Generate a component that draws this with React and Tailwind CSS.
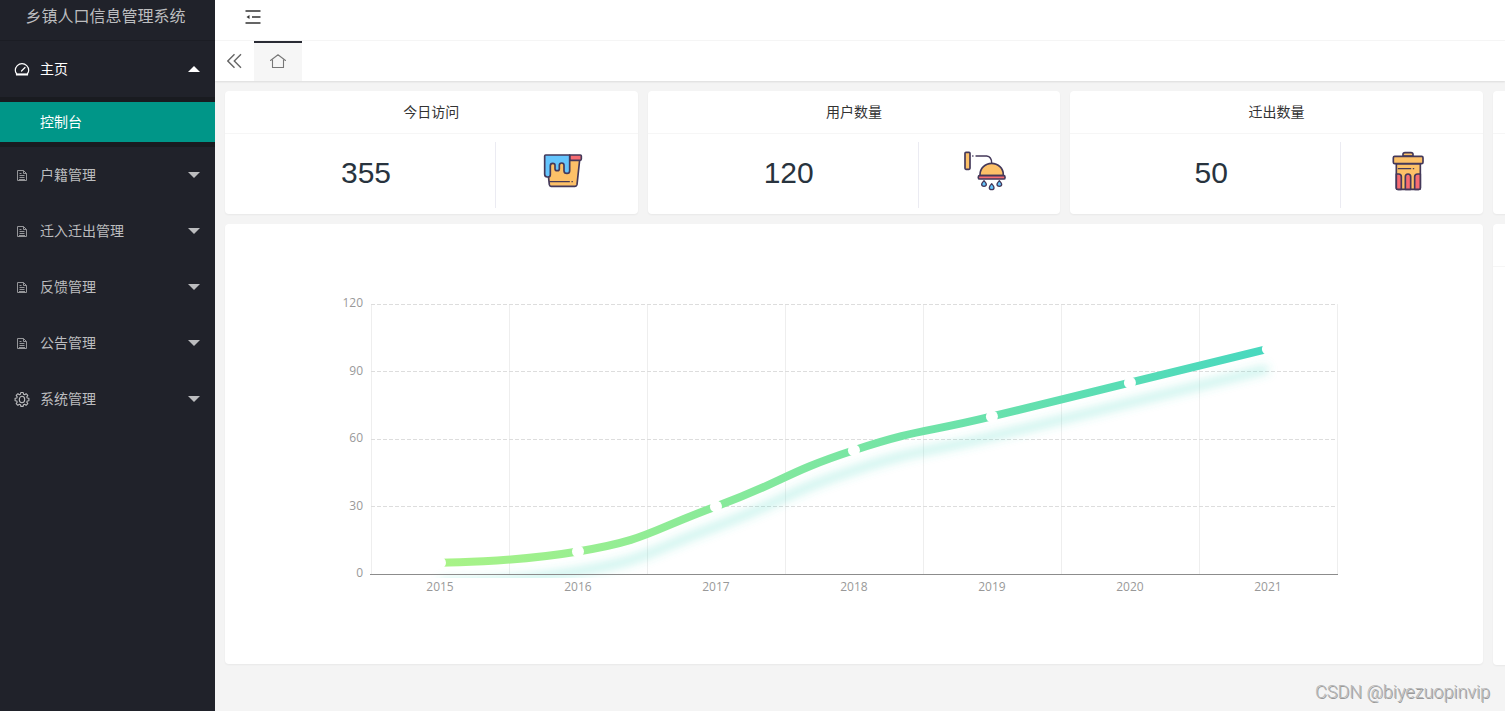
import { useState } from 'react';

const menus = [
  { label: '户籍管理', icon: FileIcon },
  { label: '迁入迁出管理', icon: FileIcon },
  { label: '反馈管理', icon: FileIcon },
  { label: '公告管理', icon: FileIcon },
  { label: '系统管理', icon: GearIcon },
];

const stats = [
  { title: '今日访问', value: 355, icon: BucketIcon },
  { title: '用户数量', value: 120, icon: ShowerIcon },
  { title: '迁出数量', value: 50, icon: TrashIcon },
];

const series = [
  { year: 2015, value: 5 },
  { year: 2016, value: 10 },
  { year: 2017, value: 30 },
  { year: 2018, value: 55 },
  { year: 2019, value: 70 },
  { year: 2020, value: 85 },
  { year: 2021, value: 100 },
];

/* ---------- Icons ---------- */

function GaugeIcon() {
  return (
    <svg className="size-4" viewBox="0 0 16 16" fill="none" stroke="currentColor" strokeWidth="1.2">
      <path d="M2.5 14V12.5C1.7 11.6 1.3 10.5 1.3 9.3a6.7 6.7 0 0 1 13.4 0c0 1.2-.4 2.3-1.2 3.2V14z" strokeLinejoin="round" />
      <path d="M7.5 10l3.5-3.5" strokeLinecap="round" />
      <path d="M2.5 13.2h11" strokeWidth="1.6" />
    </svg>
  );
}

function FileIcon() {
  return (
    <svg className="size-4 opacity-75" viewBox="0 0 16 16" fill="none" stroke="currentColor" strokeWidth="1">
      <path d="M3.5 3.5h6l3 3v7h-9z" />
      <path d="M9.5 3.5v3h3M5.5 6.5h2M5.5 8.5h5M5.5 10.5h5M5 12.5h6" />
    </svg>
  );
}

function GearIcon() {
  return (
    <svg className="size-4" viewBox="0 0 16 16" fill="none" stroke="currentColor" strokeWidth="1.1">
      <path
        d="M6.8 1.5h2.4l.3 1.7 1.1.5 1.5-1 1.7 1.7-1 1.5.4 1.1 1.7.3v2.4l-1.7.3-.4 1.1 1 1.5-1.7 1.7-1.5-1-1.1.4-.3 1.7H6.8l-.3-1.7-1.1-.4-1.5 1-1.7-1.7 1-1.5-.4-1.1-1.7-.3V7.300l1.7-.3.4-1.100-1-1.500 1.700-1.700 1.500 1 1.100-.5z"
        strokeLinejoin="round"
      />
      <ellipse cx="8" cy="8.5" rx="2.7" ry="3.2" />
    </svg>
  );
}

function FoldIcon() {
  return (
    <svg className="size-4" viewBox="0 0 16 16" fill="none" stroke="currentColor" strokeWidth="1.6">
      <path d="M.5 2h15M7 8h8.5M.5 14h15" />
      <path d="M1.5 8l3-2v4z" fill="currentColor" stroke="none" />
    </svg>
  );
}

function DoubleLeftIcon() {
  return (
    <svg className="size-4" viewBox="0 0 16 16" fill="none" stroke="currentColor" strokeWidth="1.4">
      <path d="M7.5 1.2L.8 8l6.7 6.8M14 1.2L7.3 8l6.7 6.8" />
    </svg>
  );
}

function HomeIcon() {
  return (
    <svg className="size-4" viewBox="0 0 16 16" fill="none" stroke="currentColor" strokeWidth="1.1">
      <path d="M.5 6.5L8 .8l7.5 5.7" strokeLinecap="round" strokeLinejoin="round" />
      <path d="M2.5 5.5v8h11v-8" strokeLinejoin="round" />
    </svg>
  );
}

function BucketIcon() {
  return (
    <svg className="size-[42px]" viewBox="37 30 126 126" fill="none" stroke="#44395a" strokeWidth="5" strokeLinejoin="round" strokeLinecap="round">
      <path d="M56 60H150L142 134Q141 139 136 139H64Q60 139 59 134L56 106z" fill="#fdc168" />
      <path d="M120 45H152Q155 45 155 48V57Q155 61 151 61H120z" fill="#f76c72" />
      <path
        d="M48 45H120V92Q120 100 112 100Q103 100 103 92V76Q103 69 96 69Q89 69 89 76V86Q89 92 83 92Q76 92 76 86V76Q76 70 69 70Q62 70 62 77V104Q62 111 53 111Q45 111 45 103V48Q45 45 48 45z"
        fill="#65c5fd"
      />
      <path d="M60 125H119M127 125H128" strokeWidth="4" />
    </svg>
  );
}

function ShowerIcon() {
  return (
    <svg className="size-[42px]" viewBox="45 30 126 126" fill="none" stroke="#44395a" strokeWidth="5" strokeLinejoin="round" strokeLinecap="round">
      <rect x="48" y="37" width="15" height="51" rx="3" fill="#fdc168" />
      <path d="M71 48H72M81 48H113Q128 50 128 69" strokeWidth="4" />
      <path d="M93 107V104A35 34 0 0 1 163 104V107z" fill="#fdc168" />
      <rect x="88" y="107" width="80" height="10" rx="4" fill="#f76c72" />
      <g fill="#65c5fd" strokeWidth="4">
        <path d="M105 122Q98 130 98 133A7 6 0 0 0 112 133Q112 130 105 122z" />
        <path d="M128 131Q121 139 121 143A7 6 0 0 0 135 143Q135 139 128 131z" />
        <path d="M151 122Q144 130 144 133A7 6 0 0 0 158 133Q158 130 151 122z" />
      </g>
    </svg>
  );
}

function TrashIcon() {
  return (
    <svg className="size-[42px]" viewBox="36 30 126 126" fill="none" stroke="#44395a" strokeWidth="5" strokeLinejoin="round" strokeLinecap="round">
      <path d="M84 48V43Q84 38 90 38H108Q114 38 114 43V48z" fill="#fdc168" />
      <path d="M64 71H136V143Q136 148 131 148H69Q64 148 64 143z" fill="#fdc168" />
      <rect x="55" y="49" width="89" height="22" rx="4" fill="#fdc168" />
      <path d="M64 102H71Q79 102 79 110V148H69Q64 148 64 143z" fill="#f76c72" />
      <path d="M91 148V110Q91 102 99 102Q107 102 107 110V148z" fill="#f76c72" />
      <path d="M136 102H128Q119 102 119 110V148H131Q136 148 136 143z" fill="#f76c72" />
      <path d="M70 86H107M115 86H116" strokeWidth="4" />
    </svg>
  );
}

/* ---------- Chart ---------- */

const plot = { left: 146, right: 1112, top: 80, bottom: 350, step: 138, max: 120 };

const clamp = (v, a, b) => Math.max(Math.min(v, Math.max(a, b)), Math.min(a, b));

// Smooth cubic path whose control points never leave the neighbouring segments
function smoothPath(pts) {
  let d = `M${pts[0].x} ${pts[0].y}`;
  let c1 = pts[0];
  for (let i = 1; i < pts.length; i++) {
    const prev = pts[i - 1];
    const p = pts[i];
    const next = pts[i + 1];
    let c2 = p;
    let out = p;
    if (next) {
      const a = Math.hypot(p.x - prev.x, p.y - prev.y);
      const b = Math.hypot(next.x - p.x, next.y - p.y);
      const r = b / (a + b);
      const vx = next.x - prev.x;
      const vy = next.y - prev.y;
      out = {
        x: clamp(p.x + vx * 0.5 * r, p.x, next.x),
        y: clamp(p.y + vy * 0.5 * r, p.y, next.y),
      };
      c2 = {
        x: clamp(p.x - ((out.x - p.x) * a) / b, prev.x, p.x),
        y: clamp(p.y - ((out.y - p.y) * a) / b, prev.y, p.y),
      };
      out = { x: p.x + ((p.x - c2.x) * b) / a, y: p.y + ((p.y - c2.y) * b) / a };
    }
    d += `C${c1.x} ${c1.y} ${c2.x} ${c2.y} ${p.x} ${p.y}`;
    c1 = out;
  }
  return d;
}

function TrendChart() {
  const { left, right, top, bottom, step, max } = plot;
  const toY = (v) => bottom - (v / max) * (bottom - top);
  const points = series.map((s, i) => ({ x: left + step * (i + 0.5), y: toY(s.value) }));
  const line = smoothPath(points);

  return (
    <svg className="block w-full" viewBox="0 0 1258 440" role="img" aria-label="2015-2021">
      <defs>
        <linearGradient id="trend" gradientUnits="userSpaceOnUse" x1="215" y1="0" x2="1043" y2="0">
          <stop offset="0" stopColor="#a9f387" />
          <stop offset="1" stopColor="#48d8bf" />
        </linearGradient>
        <filter id="soft" filterUnits="userSpaceOnUse" x="100" y="0" width="1100" height="440">
          <feGaussianBlur stdDeviation="5" />
        </filter>
        <clipPath id="plotArea">
          <rect x={left - 4} y={top - 4} width={right - left + 8} height={bottom - top + 8} />
        </clipPath>
      </defs>

      {/* Grid */}
      <g shapeRendering="crispEdges" fill="none">
        {series.concat({ year: 'end' }).map((s, i) => (
          <path key={s.year} d={`M${left + step * i + 0.5} ${top}V${bottom}`} stroke="#eee" />
        ))}
        {[30, 60, 90, 120].map((v) => (
          <path key={v} d={`M${left} ${Math.floor(toY(v)) + 0.5}H${right}`} stroke="#ddd" strokeDasharray="4 2" />
        ))}
      </g>

      {/* Line with its shadow */}
      <g clipPath="url(#plotArea)">
        <g filter="url(#soft)">
          <path d={line} transform="translate(0 20)" fill="none" stroke="#48d8bf" strokeOpacity="0.3" strokeWidth="8" />
        </g>
        <path d={line} fill="none" stroke="url(#trend)" strokeWidth="8" />
      </g>
      <path d={`M${left - 1} ${bottom + 0.5}H${right + 1}`} stroke="#8c8c8c" shapeRendering="crispEdges" />
      {points.map((p) => (
        <circle key={p.x} cx={p.x} cy={p.y} r="6" fill="#fff" />
      ))}

      {/* Axis labels */}
      <g className="font-['Open_Sans',sans-serif] text-[12px]" fill="#999">
        {[0, 30, 60, 90, 120].map((v) => (
          <text key={v} x={left - 8} y={Math.ceil(toY(v)) + 3} textAnchor="end">{v}</text>
        ))}
        {series.map((s, i) => (
          <text key={s.year} x={points[i].x} y={bottom + 17} textAnchor="middle">{s.year}</text>
        ))}
      </g>
    </svg>
  );
}

/* ---------- Layout ---------- */

function Caret({ up }) {
  return (
    <svg className="w-3 h-1.5 ml-auto" viewBox="0 0 12 6" fill="currentColor">
      <path d={up ? 'M0 6L6 0l6 6z' : 'M0 0h12L6 6z'} />
    </svg>
  );
}

function StatCard({ title, value, icon: Icon }) {
  return (
    <section className="bg-white rounded-sm shadow-[0_1px_2px_rgba(0,0,0,0.05)]">
      <h2 className="h-[43px] border-b border-[#f6f6f6] text-sm leading-[42px] text-center text-[#333]">{title}</h2>
      <div className="flex px-3 pt-2 pb-1.5">
        <p className="w-2/3 h-[66px] border-r border-[#ebebf2] text-center text-[30px] leading-[62px] text-[#28333e]">{value}</p>
        <div className="w-1/3 pl-1 pb-2 flex items-center justify-center"><Icon /></div>
      </div>
    </section>
  );
}

export default function App() {
  const [open, setOpen] = useState(true);

  return (
    <div className="relative flex min-h-screen overflow-hidden bg-[#f4f4f4] font-['Liberation_Sans','Noto_Sans_CJK_SC',sans-serif]">

      {/* Sidebar */}
      <aside className="w-[215px] shrink-0 bg-[#20222a] text-[#bcbdbf]">
        <h1 className="h-[41px] border-b border-[#1b1d24] text-center text-base leading-[33px] pr-1">乡镇人口信息管理系统</h1>
        <nav>
          <button className="w-full h-14 pl-3.5 pr-[15px] flex items-center gap-2.5 text-sm text-white" onClick={() => setOpen(!open)}>
            <GaugeIcon />主页<Caret up={open} />
          </button>
          {open && (
            <div className="bg-[#191b20] py-[5px]">
              <a href="#console" className="block h-10 pl-10 text-sm leading-10 bg-[#009688] text-white">控制台</a>
            </div>
          )}
          {menus.map(({ label, icon: Icon }) => (
            <button key={label} className="w-full h-14 pl-3.5 pr-[15px] flex items-center gap-2.5 text-sm">
              <Icon />{label}<Caret />
            </button>
          ))}
        </nav>
      </aside>

      {/* Main content */}
      <div className="flex-1 min-w-0">
        <header className="h-[41px] bg-white border-b border-[#f6f6f6] pl-[30px] pb-1.5 flex items-center text-[#333]">
          <button aria-label="侧边伸缩"><FoldIcon /></button>
        </header>
        <div className="h-10 bg-white flex shadow-[0_1px_2px_rgba(0,0,0,0.1)]">
          <button aria-label="向左" className="w-[39px] flex items-center justify-center text-[#666]"><DoubleLeftIcon /></button>
          <button aria-label="主页" className="w-12 bg-[#f6f6f6] border-t-2 border-[#292b34] flex items-center justify-center text-[#777]"><HomeIcon /></button>
        </div>

        {/* The grid is wider than the window, its last column runs off the right edge */}
        <main className="w-[131.05%] pl-2.5 pt-2.5 grid grid-cols-4 gap-2.5 items-start">
          {stats.map((s) => <StatCard key={s.title} {...s} />)}
          <section className="self-stretch bg-white rounded-sm shadow-[0_1px_2px_rgba(0,0,0,0.05)]">
            <div className="h-[43px] border-b border-[#f6f6f6]" />
          </section>
          <section className="col-span-3 bg-white rounded-sm shadow-[0_1px_2px_rgba(0,0,0,0.05)]">
            <TrendChart />
          </section>
          <section className="h-[441px] bg-white rounded-sm shadow-[0_1px_2px_rgba(0,0,0,0.05)]">
            <div className="h-[43px] border-b border-[#f6f6f6]" />
          </section>
        </main>
      </div>

      <p className="absolute right-[15px] bottom-[5px] font-['Roboto',sans-serif] font-light text-lg text-[#b8b8b8] [text-shadow:1px_1px_0_#999]">CSDN @biyezuopinvip</p>
    </div>
  );
}
